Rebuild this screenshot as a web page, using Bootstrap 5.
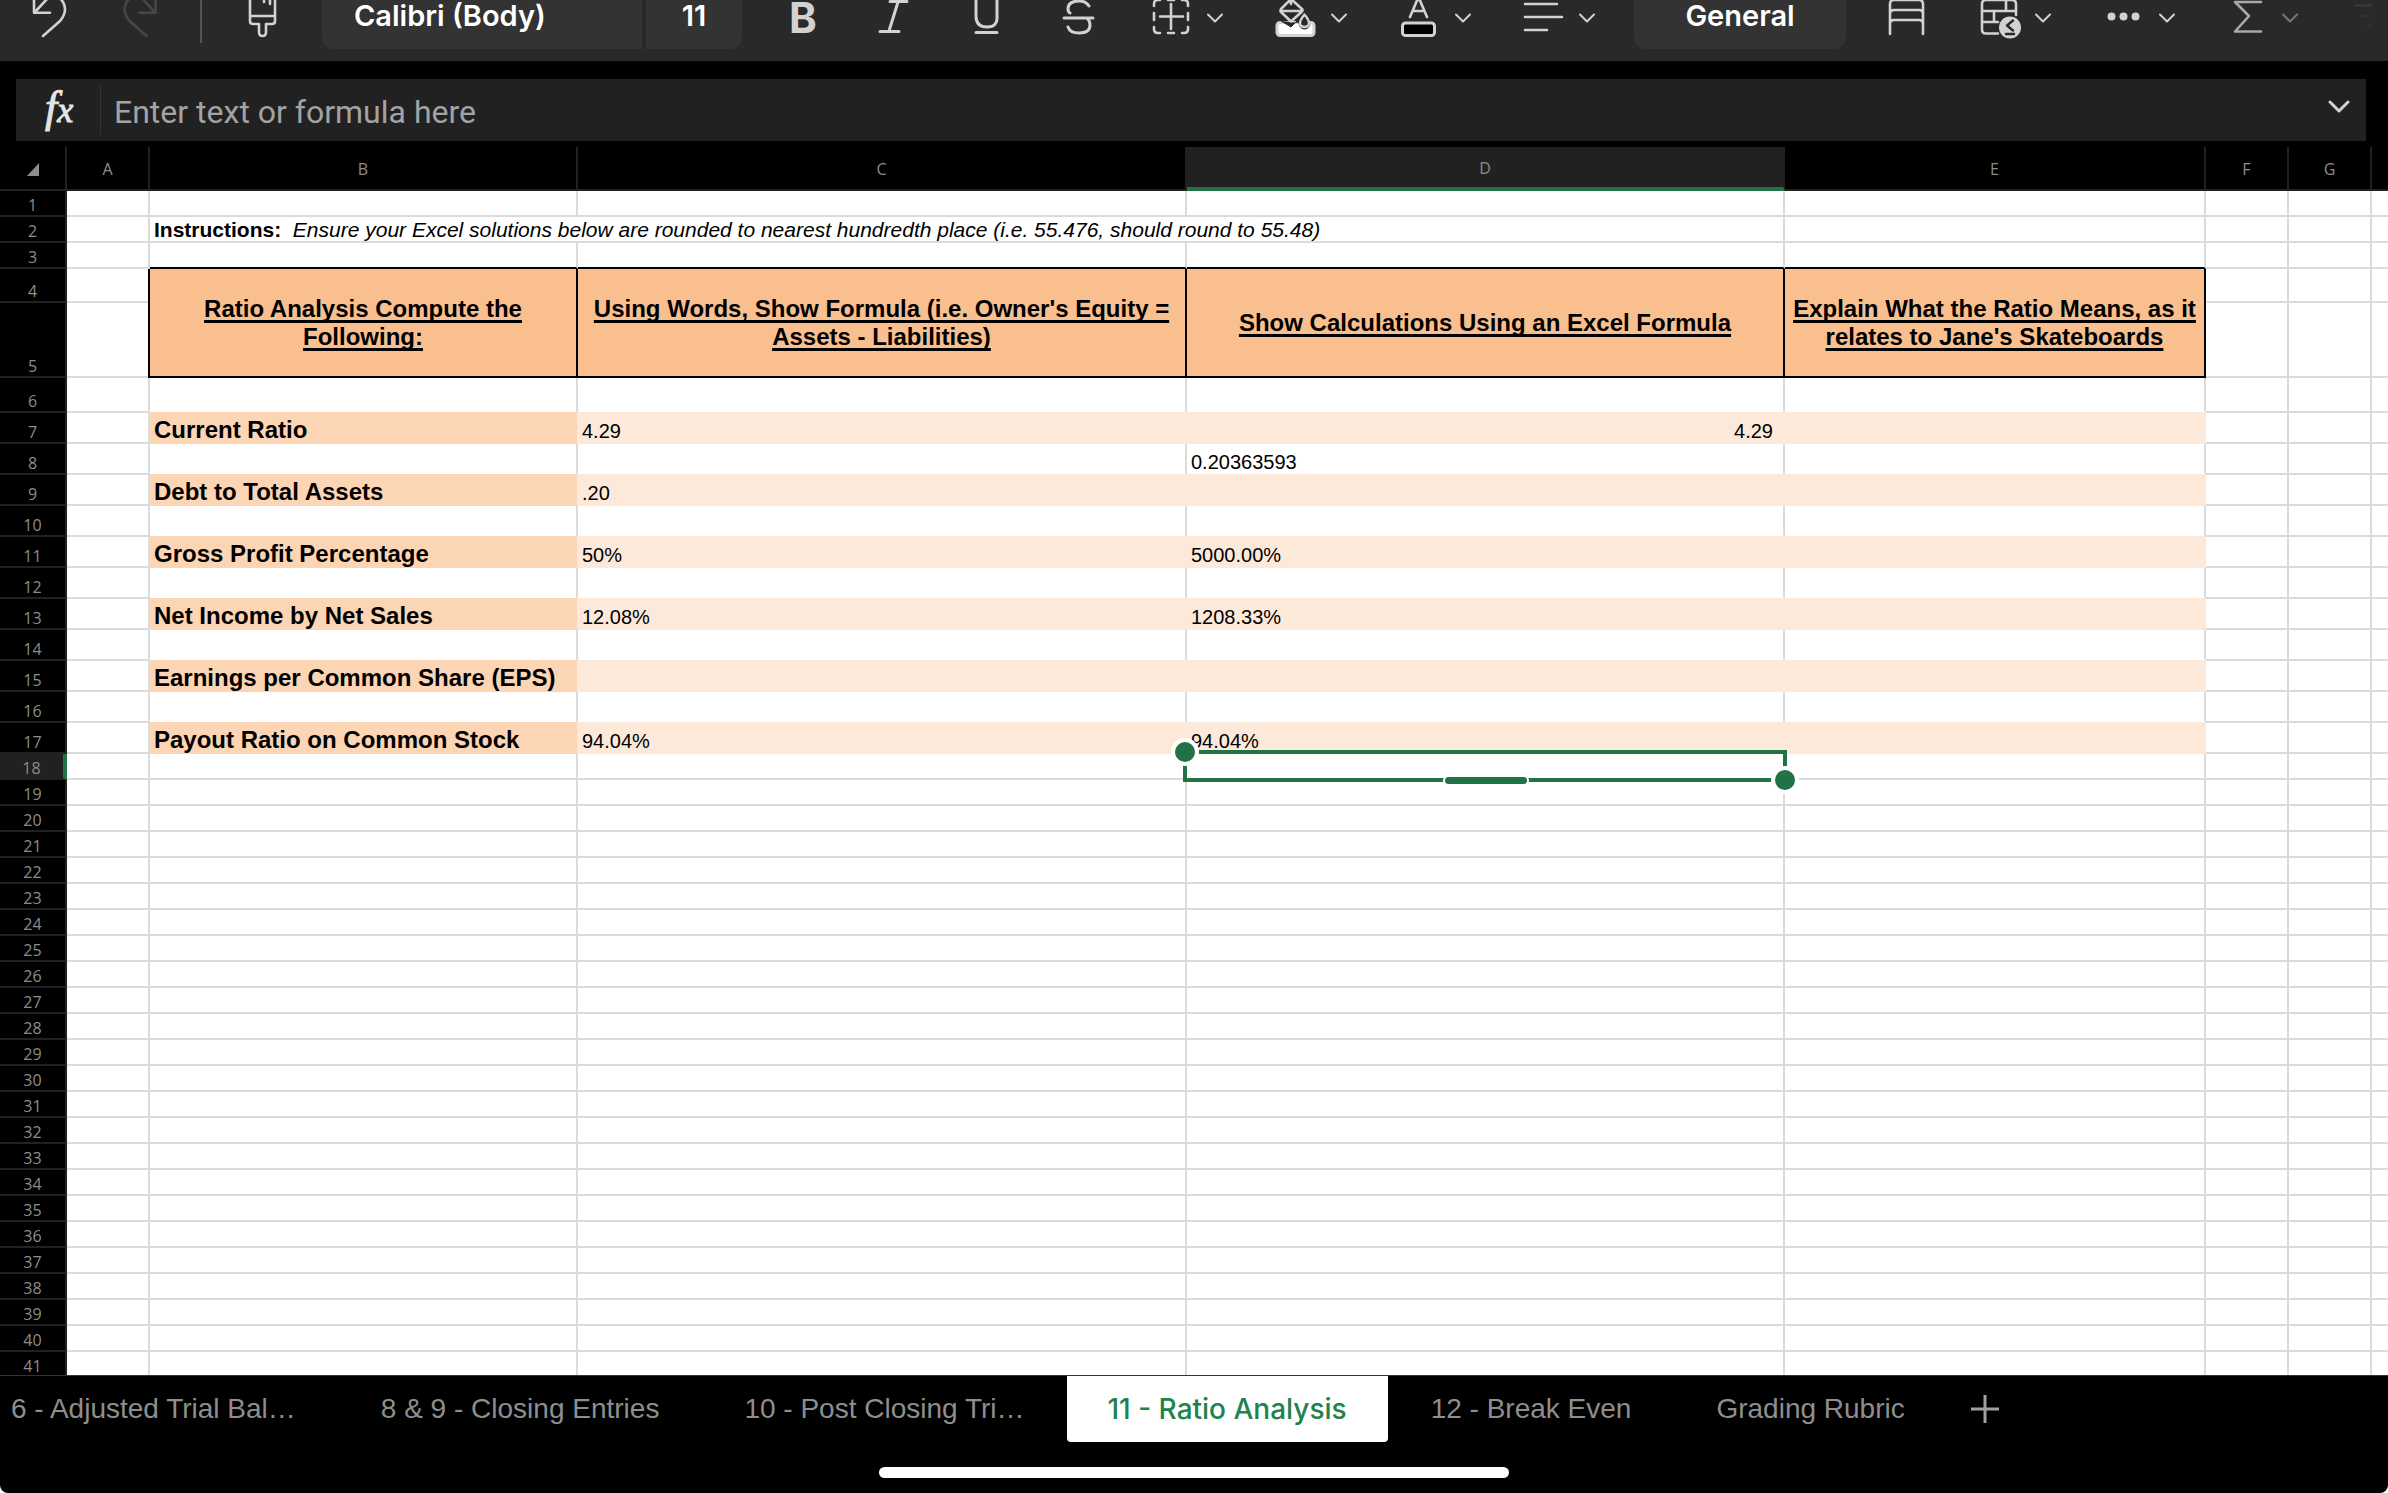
<!DOCTYPE html>
<html lang="en">
<head>
<meta charset="utf-8">
<meta name="viewport" content="width=device-width, initial-scale=1">
<title>Ratio Analysis</title>
<link rel="stylesheet" href="https://cdn.jsdelivr.net/npm/bootstrap@5.3.0/dist/css/bootstrap.min.css">
<script src="https://cdn.jsdelivr.net/npm/bootstrap@5.3.0/dist/js/bootstrap.bundle.min.js"></script>
<style>
:root { --line: #dadbdc; --chrome: #212121; --green: #217346; --icon: #d2d2d2; }
html { background: #fff; }
body { background: #000; border-radius: 0 0 8px 8px; font-family: "Liberation Sans", sans-serif; }
button { border: 0; background: none; padding: 0; color: inherit; }

.ribbon { height: 61px; background: #292929; color: #fff; font-family: Inter, sans-serif; }
.ribbon svg { display: block; height: 61px; fill: none; stroke: var(--icon); stroke-width: 3; stroke-linecap: round; stroke-linejoin: round; }
.ribbon svg text { fill: var(--icon); stroke: none; font-family: Inter, sans-serif; }
.picker { height: 49px; background: #333; padding-bottom: 17px; font-size: 29px; line-height: 28px; font-weight: 600; }
.picker-font { width: 320px; border-radius: 0 0 0 12px; padding-left: 32px; }
.picker-size { width: 96px; border-radius: 0 0 12px 0; margin-left: 4px; }
.picker-format { width: 212px; border-radius: 0 0 12px 12px; }

.formula { height: 62px; margin: 18px 22px 6px 16px; background: var(--chrome); }
.fx-label { width: 85px; height: 50px; padding-left: 2px; border-right: 1px solid #333; color: #e4e4e4; font: italic 44px/46px "Liberation Serif", serif; -webkit-text-stroke: 1px #e4e4e4; }
.fx-label span { font-size: 36px; }
.formula input { background: none; border: 0; outline: 0; color: #fff; padding: 4px 13px 0; font: 32px/40px Roboto, sans-serif; }
.formula input::placeholder { color: #a3a3a3; opacity: 1; }

.sheet { background: #fff; }
.grid { width: 100%; table-layout: fixed; border-collapse: separate; border-spacing: 0; color: #000; font-size: 20px; line-height: 21px; }
.grid th, .grid td { padding: 0 4px; border: 0 solid var(--line); border-width: 0 2px 2px 0; vertical-align: bottom; white-space: nowrap; }
.grid tr > :last-child { border-right: 0; }
.grid tbody tr { height: 26px; }
.grid .tall { height: 31px; }
.grid thead th { height: 44px; padding-top: 2px; vertical-align: middle; text-align: center; }
.grid thead th, .grid tbody th { background: #000; color: #8c8c8c; border-color: var(--chrome); font: 16px/20px "Open Sans", sans-serif; }
.grid tbody th { text-align: center; }
.grid thead .picked { background: var(--chrome); border-bottom: 4px solid var(--green); border-right-color: var(--chrome); box-shadow: -2px 0 0 var(--chrome); }
.grid tbody .picked { background: var(--chrome); border-right: 4px solid var(--green); border-bottom-color: var(--chrome); }
.grid .note { font-size: 21px; line-height: 23px; }
.grid .edge-b { border-bottom-color: #000; }
.grid .title { background: #fabf8f; border-color: #000; box-shadow: -2px 0 0 #000; text-align: center; vertical-align: middle; white-space: normal; font-weight: 700; font-size: 24px; line-height: 28px; text-decoration: underline 3px; text-underline-offset: 3px; text-decoration-skip-ink: none; }
.grid .label { background: #fcd5b4; border-color: #fcd5b4; box-shadow: -1px -1px 0 #fcd5b4; font-weight: 700; font-size: 24px; line-height: 25px; }
.grid .fill { background: #fce9da; border-color: #fce9da; box-shadow: -1px -1px 0 #fce9da; }
.grid .pale { border-bottom-color: #fff; }
.grid .num { text-align: right; padding-right: 10px; }

.selection { position: absolute; inset: -4px; border: 4px solid var(--green); z-index: 2; }
.knob, .grip { position: absolute; background: var(--green); }
.knob { width: 20px; height: 20px; border-radius: 50%; box-shadow: 0 0 0 4px #fff; }
.knob-start { left: -12px; top: -12px; }
.knob-end { right: -12px; bottom: -12px; }
.grip { left: 50%; bottom: -6px; width: 82px; height: 7px; margin-left: -40px; border-radius: 4px; box-shadow: 2px 0 0 #fff, -2px 0 0 #fff; }

.sheet-bar { height: 118px; border-top: 1px solid #333; font-size: 28px; line-height: 32px; }
.sheet-tabs { height: 66px; margin-left: -32px; }
.sheet-tabs button { padding: 0 42px 0 43px; color: #8e8e8e; white-space: nowrap; }
.sheet-tabs .current { padding: 0 41px; background: #fff; color: #21824e; border-radius: 0 0 4px 4px; font: 500 28px/32px Inter, sans-serif; }
.home-pill { width: 630px; height: 11px; border-radius: 6px; background: #fff; margin-top: 25px; }
</style>
</head>
<body class="vh-100 overflow-hidden d-flex flex-column">

<header class="ribbon d-flex flex-shrink-0 overflow-hidden">
  <button aria-label="Undo"><svg width="95" viewBox="0 0 95 61"><path stroke-width="2.6" d="M34-8V12.700H50M35 12L47-1C53-7 60-3 63 2C67 9 65 15 60 21L43 36"/></svg></button>
  <button aria-label="Redo"><svg width="105" viewBox="95 0 105 61"><path stroke="#474747" stroke-width="2.600" d="M155.600-8V12.700H139.600M154.600 12L142.600-1C136.600-7 129.600-3 126.600 2C122.600 9 124.600 15 129.600 21L146.600 36"/></svg></button>
  <svg width="22" viewBox="200 0 22 61"><path stroke="#555" stroke-width="2" stroke-linecap="butt" d="M201 0V43"/></svg>
  <button aria-label="Format painter"><svg width="100" viewBox="222 0 100 61"><path stroke-width="2.600" d="M250-3V21Q250 24 253 24H259V32Q259 36 262.500 36T266 32V24H272Q275 24 275 21V-3M250 16H275M264-3V2M270-3V4"/></svg></button>
  <button class="picker picker-font text-start">Calibri (Body)</button>
  <button class="picker picker-size">11</button>
  <button aria-label="Bold"><svg width="102" viewBox="742 0 102 61"><text x="789" y="33" font-size="42" font-weight="700">B</text></svg></button>
  <button aria-label="Italic"><svg width="94" viewBox="844 0 94 61"><path d="M890 1.500H907M880 31.500H899M898 2L889 31"/></svg></button>
  <button aria-label="Underline"><svg width="92" viewBox="938 0 92 61"><path d="M976-3V16Q976 27 987 27T997 16V-3M976 32.500H997"/></svg></button>
  <button aria-label="Strikethrough"><svg width="92" viewBox="1030 0 92 61"><path d="M1089 6Q1086 1 1079 1Q1068 1 1068 9Q1068 12 1070 13M1064 18H1093M1087 18Q1090 21 1090 25Q1090 33 1079 33Q1070 33 1068 27"/></svg></button>
  <button aria-label="Borders"><svg width="124" viewBox="1122 0 124 61"><path stroke-width="2.600" d="M1171 4V29M1160 16.500H1183M1154 13V20M1188 13V20M1168 0H1174M1168 33H1174M1154 6V4Q1154 0 1158 0H1160M1182 0H1184Q1188 0 1188 4V6M1154 27V29Q1154 33 1158 33H1160M1182 33H1184Q1188 33 1188 29V27"/><path stroke-width="2" d="M1208 14.500l7 7 7-7"/></svg></button>
  <button aria-label="Fill color"><svg width="124" viewBox="1246 0 124 61"><rect x="1277" y="22.500" width="37" height="13" rx="3" fill="#fff"/><path d="M1281 21L1291 27L1301 17L1310 24Q1309 29 1304 29Q1299 28 1299 23" fill="#292929" stroke="#292929" stroke-width="1"/><path stroke-width="2.600" fill="#292929" d="M1291-1L1281 9Q1280 11 1281 12L1291 21.500L1302 11.500Q1303 10 1302 9L1291-1V4M1281 11H1302"/><path stroke-width="2.400" fill="#292929" d="M1304.500 14.500Q1300 20 1300 23Q1300 27 1304.500 27T1309 23Q1309 20 1304.500 14.500Z"/><path stroke-width="2" d="M1332 14.500l7 7 7-7"/></svg></button>
  <button aria-label="Font color"><svg width="124" viewBox="1370 0 124 61"><path stroke-width="2.600" d="M1410 17L1418.500-3L1427 17M1413 11H1424"/><rect x="1402.500" y="23" width="32" height="12.500" rx="3" fill="#000"/><path stroke-width="2" d="M1456 14.500l7 7 7-7"/></svg></button>
  <button aria-label="Alignment"><svg width="140" viewBox="1494 0 140 61"><path stroke-width="2.600" d="M1525 4H1557M1525 17H1562M1525 30H1547"/><path stroke-width="2" d="M1580 14.500l7 7 7-7"/></svg></button>
  <button class="picker picker-format">General</button>
  <button aria-label="Format as table"><svg width="106" viewBox="1846 0 106 61"><path stroke-width="2.600" d="M1890 34V4Q1890 0 1894 0H1919Q1923 0 1923 4V34M1890 14Q1890 10 1894 10H1919Q1923 10 1923 14M1890 24Q1890 20 1894 20H1919Q1923 20 1923 24"/></svg></button>
  <button aria-label="Conditional formatting"><svg width="124" viewBox="1952 0 124 61"><path stroke-width="2.600" d="M1998 33.500H1986Q1982 33.500 1982 29.500V4Q1982 0 1986 0H2012Q2016 0 2016 4V15M1982 11H2016M1982 22H1998M2006 0V11M1994 11V22"/><circle cx="2010" cy="27.500" r="11" fill="#d2d2d2" stroke="none"/><path stroke="#292929" stroke-width="2.400" d="M2013 20.500L2007 25.500L2013 30.500M2006 34H2014"/><path stroke-width="2" d="M2036 14.500l7 7 7-7"/></svg></button>
  <button aria-label="More"><svg width="124" viewBox="2076 0 124 61"><g fill="#d2d2d2" stroke="none"><circle cx="2111.500" cy="16.500" r="4"/><circle cx="2123.500" cy="16.500" r="4"/><circle cx="2135.500" cy="16.500" r="4"/></g><path stroke-width="2" d="M2160 14.500l7 7 7-7"/></svg></button>
  <button aria-label="AutoSum"><svg width="124" viewBox="2200 0 124 61"><path stroke="#a9a9a9" stroke-width="2.600" d="M2261 2H2235L2249 16L2235 31.500H2261"/><path stroke="#777" stroke-width="2" d="M2283 14.500l7 7 7-7"/></svg></button>
  <svg width="64" viewBox="2324 0 64 61"><path stroke="#393939" stroke-width="2.600" d="M2356 5.500H2371"/><path stroke="#303030" stroke-width="2.600" d="M2362 16H2371M2368 26H2371"/></svg>
</header>

<div class="formula d-flex align-items-center flex-shrink-0">
  <label for="formula" class="fx-label text-center flex-shrink-0">f<span>x</span></label>
  <input id="formula" class="flex-grow-1" type="text" placeholder="Enter text or formula here">
  <button class="px-3 d-flex" aria-label="Expand formula bar"><svg width="22" height="24" viewBox="0 0 22 24" fill="none" stroke="#d2d2d2" stroke-width="3" stroke-linecap="round" stroke-linejoin="round"><path d="M2 4L11 13L20 4"/></svg></button>
</div>

<main class="sheet flex-grow-1 overflow-hidden" style="min-height:0">
<table class="grid">
  <colgroup><col style="width:67px"><col style="width:83px"><col style="width:428px"><col style="width:609px"><col style="width:598px"><col style="width:421px"><col style="width:83px"><col style="width:83px"><col></colgroup>
  <thead>
    <tr><th><svg class="d-block mx-auto" width="12" height="13" viewBox="0 0 12 13"><path d="M12 0V13H0Z" fill="#8c8c8c"/></svg></th><th>A</th><th>B</th><th>C</th><th class="picked">D</th><th>E</th><th>F</th><th>G</th><th></th></tr>
  </thead>
  <tbody>
    <tr><th>1</th><td></td><td></td><td></td><td></td><td></td><td></td><td></td><td></td></tr>
    <tr><th>2</th><td></td><td colspan="3" class="note"><b>Instructions:</b>&nbsp; <i>Ensure your Excel solutions below are rounded to nearest hundredth place (i.e. 55.476, should round to 55.48)</i></td><td></td><td></td><td></td><td></td></tr>
    <tr><th>3</th><td></td><td class="edge-b"></td><td class="edge-b"></td><td class="edge-b"></td><td class="edge-b"></td><td></td><td></td><td></td></tr>
    <tr style="height:34px"><th>4</th><td></td><td rowspan="2" class="title position-relative">Ratio Analysis Compute the Following:</td><td rowspan="2" class="title">Using Words, Show Formula (i.e. Owner's Equity = Assets - Liabilities)</td><td rowspan="2" class="title">Show Calculations Using an Excel Formula</td><td rowspan="2" class="title">Explain What the Ratio Means, as it relates to Jane's Skateboards</td><td></td><td></td><td></td></tr>
    <tr style="height:75px"><th>5</th><td></td><td></td><td></td><td></td></tr>
    <tr style="height:35px"><th>6</th><td></td><td class="pale"></td><td class="pale"></td><td class="pale"></td><td class="pale"></td><td></td><td></td><td></td></tr>
    <tr class="tall"><th>7</th><td></td><td class="label">Current Ratio</td><td class="fill">4.29</td><td class="fill num">4.29</td><td class="fill"></td><td></td><td></td><td></td></tr>
    <tr class="tall"><th>8</th><td></td><td class="pale"></td><td class="pale"></td><td class="pale">0.20363593</td><td class="pale"></td><td></td><td></td><td></td></tr>
    <tr class="tall"><th>9</th><td></td><td class="label">Debt to Total Assets</td><td class="fill">.20</td><td class="fill"></td><td class="fill"></td><td></td><td></td><td></td></tr>
    <tr class="tall"><th>10</th><td></td><td class="pale"></td><td class="pale"></td><td class="pale"></td><td class="pale"></td><td></td><td></td><td></td></tr>
    <tr class="tall"><th>11</th><td></td><td class="label">Gross Profit Percentage</td><td class="fill">50%</td><td class="fill">5000.00%</td><td class="fill"></td><td></td><td></td><td></td></tr>
    <tr class="tall"><th>12</th><td></td><td class="pale"></td><td class="pale"></td><td class="pale"></td><td class="pale"></td><td></td><td></td><td></td></tr>
    <tr class="tall"><th>13</th><td></td><td class="label">Net Income by Net Sales</td><td class="fill">12.08%</td><td class="fill">1208.33%</td><td class="fill"></td><td></td><td></td><td></td></tr>
    <tr class="tall"><th>14</th><td></td><td class="pale"></td><td class="pale"></td><td class="pale"></td><td class="pale"></td><td></td><td></td><td></td></tr>
    <tr class="tall"><th>15</th><td></td><td class="label">Earnings per Common Share (EPS)</td><td class="fill"></td><td class="fill"></td><td class="fill"></td><td></td><td></td><td></td></tr>
    <tr class="tall"><th>16</th><td></td><td class="pale"></td><td class="pale"></td><td class="pale"></td><td class="pale"></td><td></td><td></td><td></td></tr>
    <tr class="tall"><th>17</th><td></td><td class="label">Payout Ratio on Common Stock</td><td class="fill">94.04%</td><td class="fill">94.04%</td><td class="fill"></td><td></td><td></td><td></td></tr>
    <tr><th class="picked">18</th><td></td><td></td><td></td><td class="position-relative"><div class="selection"><span class="knob knob-start"></span><span class="knob knob-end"></span><span class="grip"></span></div></td><td></td><td></td><td></td><td></td></tr>
  </tbody>
  <tbody id="blank-rows"></tbody>
</table>
</main>

<footer class="sheet-bar flex-shrink-0">
  <nav class="sheet-tabs d-flex" aria-label="Sheets">
    <button>6 - Adjusted Trial Bal…</button>
    <button>8 &amp; 9 - Closing Entries</button>
    <button>10 - Post Closing Tri…</button>
    <button class="current" aria-current="page">11 - Ratio Analysis</button>
    <button>12 - Break Even</button>
    <button>Grading Rubric</button>
    <button class="px-4 d-flex align-items-center" aria-label="New sheet"><svg width="28" height="28" viewBox="0 0 28 28" stroke="#a0a0a0" stroke-width="3"><path d="M0 14H28M14 0V28"/></svg></button>
  </nav>
  <div class="home-pill mx-auto"></div>
</footer>

<script>
// Empty rows below the analysis
document.getElementById('blank-rows').innerHTML = Array.from({ length: 23 }, (_, i) =>
  '<tr><th>' + (i + 19) + '</th>' + '<td></td>'.repeat(8) + '</tr>').join('');
</script>
</body>
</html>
